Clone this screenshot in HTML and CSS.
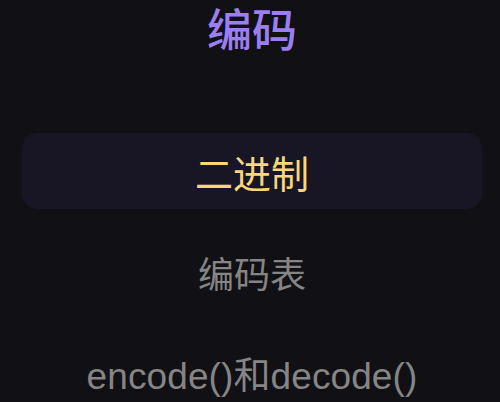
FILE: index.html
```html
<!DOCTYPE html>
<html lang="zh">
<head>
<meta charset="utf-8">
<link rel="stylesheet" href="styles.css">
</head>
<body>
<div class="page">
  <h1 class="title">编码</h1>
  <ul class="menu">
    <li class="item active">二进制</li>
    <li class="item">编码表</li>
    <li class="item code">encode()和decode()</li>
  </ul>
</div>
</body>
</html>
```
FILE: styles.css
```css
html, body {
  margin: 0;
  padding: 0;
  background: #111014;
}
body {
  font-family: "Liberation Sans", "Noto Sans CJK SC", sans-serif;
  height: 402px;
  overflow: hidden;
}
.page {
  padding: 0 18px 0 22px;
}
.title {
  margin: 0;
  height: 64px;
  line-height: 64px;
  text-align: center;
  font-size: 45px;
  font-weight: 500;
  color: #9b7ff0;
  margin-bottom: 69px;
}
.menu {
  list-style: none;
  margin: 0;
  padding: 0;
  display: flex;
  flex-direction: column;
  gap: 25px;
}
.item {
  height: 76px;
  border-radius: 16px;
  display: flex;
  align-items: center;
  justify-content: center;
  font-size: 36px;
  color: #858585;
}
.item.code {
  font-size: 37px;
  letter-spacing: 0.1px;
}
.item.active {
  background: #181624;
  color: #f8d77c;
  font-size: 38px;
}
```
